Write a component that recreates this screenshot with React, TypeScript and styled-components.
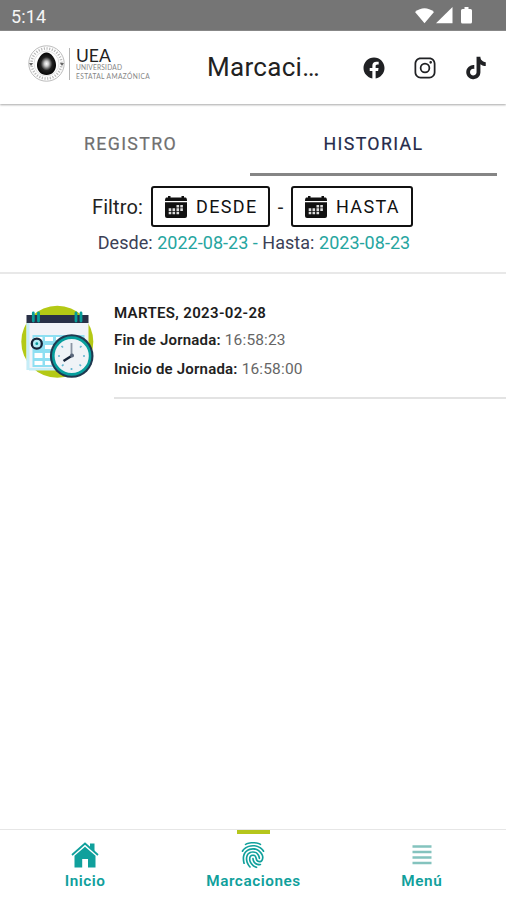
import React from "react";
import styled, { createGlobalStyle } from "styled-components";
import { IoLogoFacebook, IoLogoInstagram, IoLogoTiktok, IoFingerPrint } from "react-icons/io5";

const GlobalStyle = createGlobalStyle`
  * { box-sizing: border-box; }
  body { margin: 0; background: #fff; font-family: Roboto, "Liberation Sans", sans-serif; }
  svg { display: block; }
`;

const Screen = styled.div`
  display: flex;
  flex-direction: column;
  width: 506px;
  height: 900px;
  overflow: hidden;
  background: #fff;
  white-space: nowrap;
`;

const StatusBar = styled.div`
  display: flex;
  align-items: center;
  justify-content: space-between;
  height: 31px;
  padding: 2px 33px 0 11px;
  background: #757575;
  border-bottom: 1px solid #8b8b8b;
  color: #f5f5f5;
  font-size: 18px;
  letter-spacing: 0.1px;
`;

const Header = styled.header`
  display: flex;
  align-items: center;
  height: 73px;
  padding: 0 18px 0 28px;
  box-shadow: 0 1px 2px rgba(0, 0, 0, 0.34);
`;

const Brand = styled.div`
  display: flex;
  align-items: center;
  width: 179px;
  margin-top: -8px;
`;

const BrandText = styled.div`
  display: flex;
  flex-direction: column;
  margin-left: 4px;
  padding-left: 6px;
  height: 32px;
  border-left: 1px solid #b5b5b5;
  font-family: Lato, sans-serif;
  color: #222;
`;

const BrandName = styled.span`
  font-size: 17.5px;
  line-height: 15px;
  letter-spacing: 0;
`;

const BrandLine = styled.span<{ $spacing: number }>`
  font-size: 6.6px;
  line-height: 9px;
  color: #858585;
  letter-spacing: ${(p) => p.$spacing}px;
`;

const Title = styled.h1`
  margin: -1px 0 0;
  flex: 1;
  font-size: 26px;
  font-weight: 400;
  letter-spacing: 0.3px;
  color: #222;
`;

const Socials = styled.div`
  display: flex;
  gap: 27px;
  color: #202124;
`;

const Tabs = styled.nav`
  display: flex;
  height: 72px;
  padding: 0 9px 0 10px;
`;

const Tab = styled.div<{ $active?: boolean }>`
  display: flex;
  align-items: center;
  justify-content: center;
  flex: ${(p) => (p.$active ? "0 0 247px" : "1")};
  padding-top: ${(p) => (p.$active ? 9 : 6)}px;
  border-bottom: ${(p) => (p.$active ? "3px solid #858585" : "none")};
  padding-left: ${(p) => (p.$active ? 0 : 1)}px;
  color: ${(p) => (p.$active ? "#262b4b" : "#707070")};
  font-size: 17.8px;
  font-weight: 400;
  letter-spacing: 1.35px;
  -webkit-text-stroke: 0.2px currentColor;
`;

const Filters = styled.section`
  height: 98px;
  padding-top: 10px;
  border-bottom: 2px solid #e8e8e8;
`;

const FilterRow = styled.div`
  display: flex;
  align-items: center;
  padding-left: 92px;
  height: 41px;
  color: #222;
  font-size: 20px;
`;

const FilterLabel = styled.span`
  width: 59px;
  letter-spacing: 0.1px;
`;

const Dash = styled.span`
  width: 21px;
  text-align: center;
`;

const DateButton = styled.button<{ $width: number }>`
  display: flex;
  align-items: center;
  gap: 9px;
  width: ${(p) => p.$width}px;
  height: 41px;
  padding: 0 0 1px 12px;
  background: #fff;
  border: 2px solid #111;
  border-radius: 3px;
  color: #111;
  font-family: inherit;
  font-size: 18px;
  letter-spacing: 1.35px;

  svg {
    margin-top: 1px;
  }
`;

const Range = styled.div`
  display: flex;
  justify-content: center;
  gap: 4.5px;
  margin-top: 4px;
  padding-left: 2px;
  font-size: 18px;
  line-height: 23px;
  color: #3b4056;
  letter-spacing: 0.03px;
`;

const Teal = styled.span`
  color: #26a5a0;
`;

const Entry = styled.article`
  display: flex;
  height: 125px;
  padding-left: 20px;
`;

const EntryIcon = styled.div`
  width: 94px;
  padding-top: 29px;
`;

const EntryBody = styled.div`
  flex: 1;
  padding-top: 27px;
  border-bottom: 2px solid #e3e3e3;
  font-size: 15.5px;
  color: #666;
`;

const EntryDate = styled.div`
  height: 27px;
  line-height: 25px;
  font-size: 15px;
  font-weight: 600;
  letter-spacing: 0.35px;
  color: #1c1c1c;
`;

const EntryLine = styled.div`
  height: 29px;
  line-height: 25px;
  letter-spacing: 0.15px;

  b {
    color: #222;
    font-size: 15px;
    font-weight: 600;
    letter-spacing: 0.2px;
  }
`;

const TabBar = styled.footer`
  display: grid;
  grid-template-columns: repeat(3, 1fr);
  height: 71px;
  margin-top: auto;
  padding-left: 1px;
  border-top: 1px solid #e6e6e6;
  color: #10a09c;
`;

const BarItem = styled.div<{ $active?: boolean }>`
  display: flex;
  flex-direction: column;
  align-items: center;
  font-size: 15.3px;
  font-weight: 600;
  letter-spacing: 0.55px;

  &::before {
    content: "";
    width: 33px;
    height: 4px;
    margin-left: 1px;
    background: ${(p) => (p.$active ? "#b5c61c" : "transparent")};
  }
`;

const BarIcon = styled.div`
  display: flex;
  align-items: center;
  height: 28px;
  margin: 7px 0 1px;
`;

const BarLabel = styled.span`
  line-height: 22px;
`;

const SignalIcons = () => (
  <svg width="58" height="18" viewBox="0 0 58 18" fill="#fff">
    <path d="M0 5Q9.500-2.500 19 5L9.500 16.200Z" />
    <path d="M21 16.200L37.500 0V16.200Z" />
    <path d="M49.500 0h4v2h2q1.500 0 1.500 1.500v11.500q0 1.500-1.500 1.500h-8q-1.500 0-1.500-1.500V3.500Q46 2 47.500 2h2Z" />
  </svg>
);

const Seal = () => (
  <svg width="37" height="37" viewBox="0 0 37 37">
    <defs>
      <radialGradient id="core">
        <stop offset="0" stopColor="#fff" />
        <stop offset=".22" stopColor="#ccc" />
        <stop offset=".6" stopColor="#222" />
        <stop offset="1" stopColor="#050505" />
      </radialGradient>
    </defs>
    <circle cx="18.500" cy="18.500" r="17.700" fill="#fff" stroke="#aaa" strokeWidth=".8" />
    <circle cx="18.500" cy="18.500" r="15" fill="none" stroke="#bbb" strokeWidth="2.600" strokeDasharray="1.200 1.500" />
    <circle cx="18.500" cy="18.500" r="12.500" fill="#fff" stroke="#ccc" strokeWidth=".6" />
    <path d="M18.500 7.500C23 7.500 28 14 28 20C28 26 24 30 18.500 30S9 26 9 20C9 14 14 7.500 18.500 7.500Z" fill="url(#core)" />
    <path d="M1 18h4l-2 3zM32 18h4l-2 3z" fill="#666" />
  </svg>
);

const CalendarIcon = () => (
  <svg width="22" height="22" viewBox="0 0 22 22">
    <path d="M3 0h2.500v1.500h11V0H19v1.500h1.500Q22 1.500 22 5H0Q0 1.500 1.500 1.500H3Z" fill="#111" />
    <path d="M0 6.200h22V20q0 2-2 2H2q-2 0-2-2Z" fill="#111" />
    <path
      d="M11.500 9h2.600v2.600h-2.600zM15.300 9h2.600v2.600h-2.600zM7.500 12.300h2.600v2.600H7.500zM11.500 12.300h2.600v2.600h-2.600zM15.300 12.300h2.600v2.600h-2.600zM3.700 12.300h2.600v2.600H3.700zM3.700 15.700h2.600v2.600H3.700zM7.500 15.700h2.600v2.600H7.500zM11.500 15.700h2.600v2.600h-2.600z"
      fill="#ddd"
    />
  </svg>
);

const ScheduleIcon = () => (
  <svg width="76" height="78" viewBox="0 0 76 78">
    <circle cx="37.300" cy="38.800" r="36" fill="#b4c915" />
    <path d="M6.500 20h62v47h-62z" fill="#f1f3f8" />
    <path d="M6.500 20h3v47h-3zM9 65h35v2.500H9z" fill="#c5edf7" />
    <path d="M12.500 32h52v32h-52z" fill="#8edff2" />
    <g fill="#fff">
      <path d="M14.500 34h8v4h-8zM25 34h8v4h-8zM36 34h8v4h-8zM47 34h8v4h-8zM58 34h5v4h-5zM25 42h8v4h-8zM36 42h8v4h-8zM14.500 50h8v5h-8zM25 50h8v5h-8zM14.500 58h8v4h-8zM25 58h8v4h-8z" />
    </g>
    <path d="M6.500 12h62v8h-62z" fill="#293047" />
    <path d="M13.300 10v8M18.500 10v8M56 10v8M61 10v8" stroke="#079c99" strokeWidth="2.800" strokeLinecap="round" />
    <circle cx="16.800" cy="40.700" r="5" fill="#b7edf5" stroke="#162337" strokeWidth="2.300" />
    <circle cx="16.800" cy="40.700" r="1.400" fill="#09999b" />
    <circle cx="51.700" cy="53" r="21.800" fill="#20384f" />
    <circle cx="51.700" cy="53" r="18.400" fill="#eff3f7" stroke="#079e9d" strokeWidth="2.600" />
    <path d="M38 53h2M63 53h2M51.500 65v2M41.500 43l1.500 1.500M61.500 43L60 44.500M42 63l1.500-1.500M61 63l-1.500-1.500" stroke="#63b5d1" strokeWidth="1.700" />
    <path d="M51.500 40v13.500" stroke="#8b95a3" strokeWidth="1.800" />
    <path d="M53 52L43.500 58" stroke="#162337" strokeWidth="2.500" />
    <circle cx="52" cy="52.500" r="2" fill="#59667a" />
  </svg>
);

const HomeIcon = () => (
  <svg width="28" height="26" viewBox="0 0 28 26">
    <path d="M1 13L14 1.500L27 13" fill="none" stroke="#10a09c" strokeWidth="1.800" />
    <path d="M19 1.500h4.500v8L19 5.500Z" fill="#10a09c" />
    <path d="M3.500 13.700L14 4.700L24.500 13.700V25.500H17V17H11.200V25.500H3.500Z" fill="#10a09c" />
  </svg>
);

const MenuIcon = () => (
  <svg width="20" height="20" viewBox="0 0 20 20">
    <path d="M.5 1.500h19M.5 7h19M.5 12.500h19M.5 18h19" stroke="#84c3be" strokeWidth="2.600" />
  </svg>
);

export default function App() {
  return (
    <Screen>
      <GlobalStyle />
      <StatusBar>
        <span>5:14</span>
        <SignalIcons />
      </StatusBar>
      <Header>
        <Brand>
          <Seal />
          <BrandText>
            <BrandName>UEA</BrandName>
            <BrandLine $spacing={0.2}>UNIVERSIDAD</BrandLine>
            <BrandLine $spacing={0.4}>ESTATAL AMAZÓNICA</BrandLine>
          </BrandText>
        </Brand>
        <Title>Marcaci…</Title>
        <Socials>
          <IoLogoFacebook size={24} />
          <IoLogoInstagram size={24} />
          <IoLogoTiktok size={24} />
        </Socials>
      </Header>
      <Tabs>
        <Tab>REGISTRO</Tab>
        <Tab $active>HISTORIAL</Tab>
      </Tabs>
      <Filters>
        <FilterRow>
          <FilterLabel>Filtro:</FilterLabel>
          <DateButton $width={119}>
            <CalendarIcon />
            DESDE
          </DateButton>
          <Dash>-</Dash>
          <DateButton $width={122}>
            <CalendarIcon />
            HASTA
          </DateButton>
        </FilterRow>
        <Range>
          <span>Desde:</span>
          <Teal>2022-08-23 -</Teal>
          <span>Hasta:</span>
          <Teal>2023-08-23</Teal>
        </Range>
      </Filters>
      <Entry>
        <EntryIcon>
          <ScheduleIcon />
        </EntryIcon>
        <EntryBody>
          <EntryDate>MARTES, 2023-02-28</EntryDate>
          <EntryLine>
            <b>Fin de Jornada:</b> 16:58:23
          </EntryLine>
          <EntryLine>
            <b>Inicio de Jornada:</b> 16:58:00
          </EntryLine>
        </EntryBody>
      </Entry>
      <TabBar>
        <BarItem>
          <BarIcon>
            <HomeIcon />
          </BarIcon>
          <BarLabel>Inicio</BarLabel>
        </BarItem>
        <BarItem $active>
          <BarIcon>
            <IoFingerPrint size={28} />
          </BarIcon>
          <BarLabel>Marcaciones</BarLabel>
        </BarItem>
        <BarItem>
          <BarIcon>
            <MenuIcon />
          </BarIcon>
          <BarLabel>Menú</BarLabel>
        </BarItem>
      </TabBar>
    </Screen>
  );
}
